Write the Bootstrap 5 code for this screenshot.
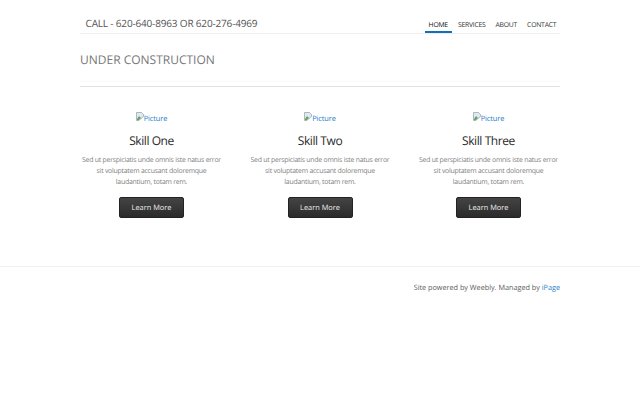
<!DOCTYPE html>
<html lang="en">
<head>
<meta charset="utf-8">
<title>Under Construction</title>
<link href="https://cdn.jsdelivr.net/npm/bootstrap@5.3.0/dist/css/bootstrap.min.css" rel="stylesheet">
<style>
body{font-family:"Open Sans",sans-serif;font-size:7px;color:#606060;background:#fff;min-height:400px;text-rendering:geometricPrecision}
a{color:#1c80c8;text-decoration:none}
.page{width:480px}
.site-head{height:34px;border-bottom:1px solid #eee}
.phone{font-size:10px;line-height:14px;letter-spacing:-.17px;color:#555;padding:16px 0 0 5.5px;white-space:nowrap}
.menu .nav-link{font-size:6.8px;line-height:10px;letter-spacing:-.22px;color:#333;padding:1px 3.7px 0;border-bottom:2px solid transparent;margin-left:2.6px;height:14px}
.menu .nav-link.active{color:#111;border-color:#1070bd}
.banner{height:53px;border-bottom:1px solid #e2e2e2;padding-top:17px}
.banner h1{font-size:12px;line-height:18px;color:#777;font-weight:400;height:31px;border-bottom:1px solid #fafafa}
.skills{padding-top:25px;gap:25.5px;height:179px}
.skill{width:143px}
.pic{height:12px;font-size:7.4px;line-height:14px;letter-spacing:-.1px}
.skill h2{font-size:12px;line-height:18px;color:#2a2a2a;font-weight:400;letter-spacing:-.42px;margin:8px 0 5px}
.skill p{font-size:6.9px;line-height:11px;letter-spacing:-.23px;color:#808080;white-space:nowrap;margin:0 0 8.5px}
.btn-dark-grad{width:65px;height:21px;font-size:7.4px;line-height:20px;padding:0;color:#eee;border:1px solid #222;border-radius:2px;background:linear-gradient(#444,#2b2b2b)}
.site-foot{border-top:1px solid #f0f0f0;padding-top:16px;font-size:7.3px;line-height:11px;letter-spacing:-.02px}
</style>
<script src="https://cdn.jsdelivr.net/npm/bootstrap@5.3.0/dist/js/bootstrap.bundle.min.js"></script>
</head>
<body>
<div class="page mx-auto">
<header class="site-head d-flex justify-content-between">
<div class="phone">CALL - 620-640-8963 OR 620-276-4969</div>
<nav class="menu nav flex-nowrap align-self-end"><a class="nav-link active" href="#">HOME</a><a class="nav-link" href="#">SERVICES</a><a class="nav-link" href="#">ABOUT</a><a class="nav-link" href="#">CONTACT</a></nav>
</header>
<section class="banner"><h1 class="m-0">UNDER CONSTRUCTION</h1></section>
<main class="skills d-flex">
<section class="skill text-center"><a class="pic d-flex justify-content-center" href="#"><svg width="8" height="9" viewBox="0 0 8 9"><path d="M.5.5h5l2 2v2L5 6.5 3 8.5H.5z" fill="#dce9f7" stroke="#999" stroke-width=".7"/><path d="M1 7l2-3 2 2-2 2H1z" fill="#65a75a"/></svg>Picture</a><h2>Skill One</h2><p>Sed ut perspiciatis unde omnis iste natus error<br>sit voluptatem accusant doloremque<br>laudantium, totam rem.</p><a class="btn btn-dark-grad" href="#">Learn More</a></section>
<section class="skill text-center"><a class="pic d-flex justify-content-center" href="#"><svg width="8" height="9" viewBox="0 0 8 9"><path d="M.5.5h5l2 2v2L5 6.5 3 8.5H.5z" fill="#dce9f7" stroke="#999" stroke-width=".7"/><path d="M1 7l2-3 2 2-2 2H1z" fill="#65a75a"/></svg>Picture</a><h2>Skill Two</h2><p>Sed ut perspiciatis unde omnis iste natus error<br>sit voluptatem accusant doloremque<br>laudantium, totam rem.</p><a class="btn btn-dark-grad" href="#">Learn More</a></section>
<section class="skill text-center"><a class="pic d-flex justify-content-center" href="#"><svg width="8" height="9" viewBox="0 0 8 9"><path d="M.5.5h5l2 2v2L5 6.5 3 8.5H.5z" fill="#dce9f7" stroke="#999" stroke-width=".7"/><path d="M1 7l2-3 2 2-2 2H1z" fill="#65a75a"/></svg>Picture</a><h2>Skill Three</h2><p>Sed ut perspiciatis unde omnis iste natus error<br>sit voluptatem accusant doloremque<br>laudantium, totam rem.</p><a class="btn btn-dark-grad" href="#">Learn More</a></section>
</main>
</div>
<footer class="site-foot"><div class="page mx-auto text-end">Site powered by Weebly. Managed by <a href="#">iPage</a></div></footer>
</body>
</html>
